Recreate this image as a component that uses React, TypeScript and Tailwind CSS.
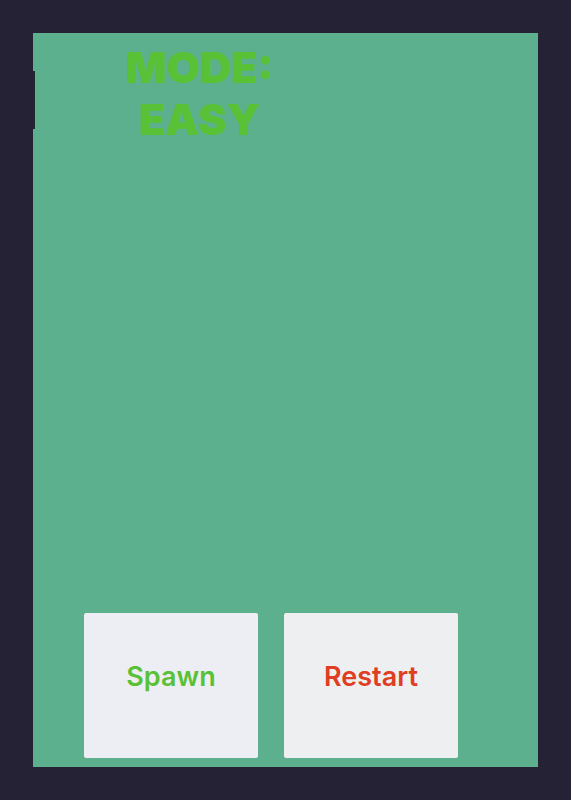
import React from "react";

interface ActionButtonProps {
  label: string;
  className: string;
}

const ActionButton = ({ label, className }: ActionButtonProps) => {
  return (
    <button
      type="button"
      className={`flex-1 h-[145px] pb-[18px] rounded-xs text-[27px] leading-8 font-semibold ${className}`}
    >
      {label}
    </button>
  );
};

const App = () => {
  return (
    <main className="min-h-screen flex bg-[#252236] p-[33px] font-['Inter',sans-serif]">
      <section className="relative flex-1 flex flex-col justify-between bg-[#5db08d]">
        {/* Paddle on the left wall */}
        <div className="absolute left-0 top-[38px] w-0.5 h-[58px] bg-[#1f2a30]"></div>

        <h1 className="w-[66%] pt-2 text-center text-[43px] leading-[52px] font-black text-[#59c135]">
          MODE:
          <br />
          EASY
        </h1>

        {/* Controls */}
        <div className="flex gap-[26px] pl-[51px] pr-20 pb-[9px]">
          <ActionButton label="Spawn" className="bg-[#edeef3] text-[#59c135]" />
          <ActionButton label="Restart" className="bg-[#eeeff1] text-[#df3e23]" />
        </div>
      </section>
    </main>
  );
};

export default App;
